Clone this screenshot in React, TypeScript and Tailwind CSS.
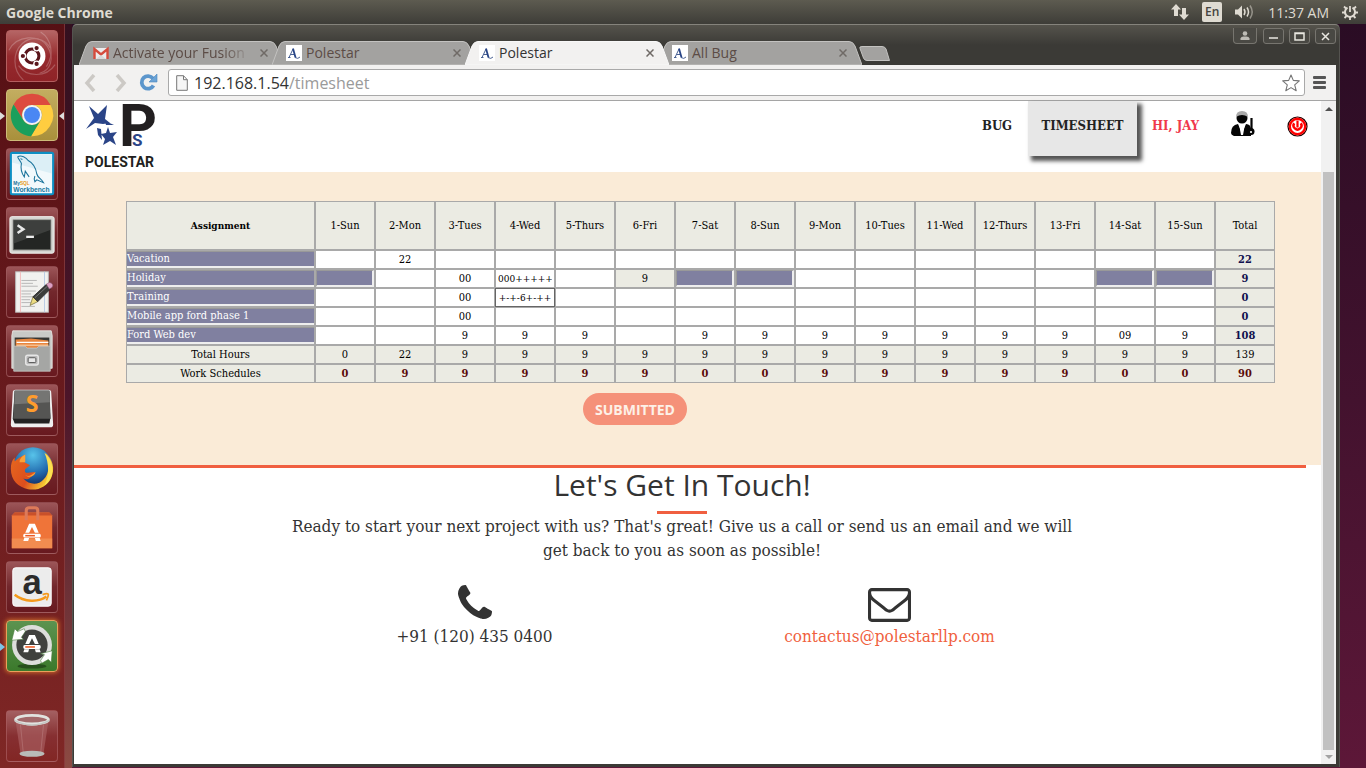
import React from "react";

const SERIF = "font-['DejaVu_Serif_Condensed','DejaVu_Serif',serif]";
const SANS = "font-['Open_Sans','Noto_Sans',sans-serif]";

/* ---------- Timesheet data ---------- */

const DAYS = [
  "1-Sun", "2-Mon", "3-Tues", "4-Wed", "5-Thurs", "6-Fri", "7-Sat", "8-Sun",
  "9-Mon", "10-Tues", "11-Wed", "12-Thurs", "13-Fri", "14-Sat", "15-Sun",
];

type Row = { name: string; cells: Record<number, string>; total: string; off?: number[]; shaded?: number[] };

const ROWS: Row[] = [
  { name: "Vacation", cells: { 1: "22" }, total: "22" },
  { name: "Holiday", cells: { 2: "00", 3: "000++++++", 5: "9" }, total: "9", off: [0, 6, 7, 13, 14], shaded: [5] },
  { name: "Training", cells: { 2: "00", 3: "+-+-6+-++" }, total: "0" },
  { name: "Mobile app ford phase 1", cells: { 2: "00" }, total: "0" },
  {
    name: "Ford Web dev",
    cells: { 2: "9", 3: "9", 4: "9", 6: "9", 7: "9", 8: "9", 9: "9", 10: "9", 11: "9", 12: "9", 13: "09", 14: "9" },
    total: "108",
  },
];

const TOTAL_HOURS = ["0", "22", "9", "9", "9", "9", "9", "9", "9", "9", "9", "9", "9", "9", "9"];
const SCHEDULES = ["0", "9", "9", "9", "9", "9", "0", "0", "9", "9", "9", "9", "9", "0", "0"];

/* ---------- Launcher icons ---------- */

const UbuntuIcon = () => (
  <svg viewBox="0 0 52 52" className="size-full">
    <g fill="none" stroke="#fff" strokeWidth="1.2" opacity=".22">
      <path d="M2 20C10 4 34 3 42 16s3 25-8 28" /><path d="M17 51C5 40 6 22 16 13s24-5 29 5" />
      <path d="M50 35C41 49 20 48 12 36" /><path d="M35 1c12 8 14 24 6 36" />
    </g>
    <circle cx="26" cy="26" r="14" fill="#fff" />
    <circle cx="26" cy="26" r="7.2" fill="none" stroke="#5a161c" strokeWidth="3.2" />
    <g stroke="#fff" strokeWidth="1.4" fill="#5a161c">
      <circle cx="16.5" cy="26" r="2.9" /><circle cx="30.8" cy="17.8" r="2.9" /><circle cx="30.8" cy="34.2" r="2.9" />
    </g>
  </svg>
);

const ChromeIcon = () => (
  <svg viewBox="0 0 52 52" className="size-full">
    <path fill="#dd4b3e" d="M26 15.5H45.3A22 22 0 0 0 6.9 15L16.9 31.25A10.5 10.5 0 0 1 26 15.5Z" />
    <path fill="#ffcd40" d="M45.3 15.5A22 22 0 0 1 25 48L35.1 31.25A10.5 10.5 0 0 0 26 15.5Z" />
    <path fill="#1a9f5c" d="M6.9 15A22 22 0 0 0 25 48L35.1 31.25A10.5 10.5 0 0 1 16.9 31.25Z" />
    <circle cx="26" cy="26" r="10.3" fill="#f3f3f3" />
    <circle cx="26" cy="26" r="8.3" fill="#4a87f3" />
  </svg>
);

const WorkbenchIcon = () => (
  <svg viewBox="0 0 52 52" className="size-full">
    <rect x="4" y="4" width="44" height="43" rx="1.5" fill="#f2f9fc" stroke="#0d8fc4" strokeWidth="2.2" />
    <path d="M5.5 5.500h41v20L5.500 14z" fill="#dceff6" />
    <path d="M11 8c4-2 9 1 11 4 6 3 8 8 9 14 1 4 5 5 7 9l-7-3-2 2c-1-3-1-4 0-6M11 8c1 3 3 4 4 7-1 5 0 10 3 14l1-6 4 6M14 10l2 1" fill="none" stroke="#1a739b" strokeWidth="1.1" />
    <text x="6.500" y="37.500" fontSize="5" fontWeight="700" fill="#1a739b" fontFamily="Liberation Sans">My<tspan fill="#e99a20">SQL</tspan></text>
    <text x="6.500" y="44.500" fontSize="7" fontWeight="700" fill="#14779f" fontFamily="Liberation Sans">Workbench</text>
  </svg>
);

const TerminalIcon = () => (
  <svg viewBox="0 0 52 52" className="size-full">
    <rect x="3" y="9" width="46" height="38" rx="2" fill="#d5d6d2" stroke="#f2f2f0" />
    <rect x="6.500" y="12.500" width="39" height="31" fill="#242624" stroke="#6b6d69" />
    <path d="M7 13h38v10L7 37z" fill="#454845" opacity=".75" />
    <path d="M11 18l6 4-6 4" fill="none" stroke="#e8e8e8" strokeWidth="2.6" /><path d="M20 30h8" stroke="#eee" strokeWidth="2.4" />
  </svg>
);

const EditorIcon = () => (
  <svg viewBox="0 0 52 52" className="size-full">
    <rect x="9" y="5" width="34" height="42" fill="#f1f1ef" stroke="#bbb" />
    <path d="M14 5v42" stroke="#f3bcbc" strokeWidth="1" /><path d="M39 5v42" stroke="#b9cbe4" strokeWidth="1" />
    <path d="M15 14h16M15 17h12M15 20h17M15 25h15M15 28h10M15 31h16M15 34h9M15 37h12M15 41h14" stroke="#b5b5b5" strokeWidth="1" />
    <path d="M24 40l3-9 5 5z" fill="#ebdc83" stroke="#7c7342" strokeWidth=".8" />
    <path d="M27 31L41 18l4 5-13 13z" fill="#3b3d3b" stroke="#1b1b1b" strokeWidth=".8" /><path d="M29 32l13-12" stroke="#777" />
    <path d="M41 18l3-2q5 1 3 5l-3 2z" fill="#dd9fc2" stroke="#915e7a" strokeWidth=".6" />
  </svg>
);

const FilesIcon = () => (
  <svg viewBox="0 0 52 52" className="size-full">
    <path d="M6 5h40l1 5v34H5V10z" fill="#c9cac7" stroke="#f0f0ee" strokeWidth=".8" />
    <rect x="8" y="12" width="36" height="12" fill="#343533" />
    <path d="M9 14l16-1 18 2v9H9z" fill="#e8863f" /><path d="M10 17h33" stroke="#fff" strokeWidth="1.5" /><path d="M10 20h33" stroke="#f8bf8d" strokeWidth="1.5" />
    <path d="M7 21h12l2 2h10l2-2h12v26H7z" fill="#a5a6a4" stroke="#c9cac8" strokeWidth=".8" />
    <rect x="19.500" y="30.500" width="13" height="10" rx="2" fill="#bbb" stroke="#e6e6e6" strokeWidth="1.5" />
    <rect x="22" y="33" width="8" height="5" rx="1" fill="#e7e7e7" stroke="#555" />
  </svg>
);

const SublimeIcon = () => (
  <svg viewBox="0 0 52 52" className="size-full overflow-visible">
    <path d="M6 8q0-3 3-3h34q3 0 3 3l2 33q0 3-3 3H7q-3 0-3-3z" fill="#efefef" />
    <path d="M8 6h36l1 29-1 5H8l-2-5z" fill="#222" />
    <path d="M8 6h36l1.500 29h-39z" fill="#555553" /><path d="M8 6h36l.6 12-36.900 2z" fill="#757573" />
    <text x="26" y="28" textAnchor="middle" fontSize="24" fontWeight="700" fill="#ff9c2c" fontFamily="Open Sans">S</text>
  </svg>
);

const FirefoxIcon = () => (
  <svg viewBox="0 0 52 52" className="size-full">
    <defs>
      <radialGradient id="ffBlue" cx=".5" cy=".2" r=".8"><stop offset="0" stopColor="#57c3ea" /><stop offset=".6" stopColor="#2169ad" /><stop offset="1" stopColor="#12275e" /></radialGradient>
      <linearGradient id="ffFox" x1="0" y1="0" x2="1" y2=".5"><stop offset="0" stopColor="#e66a1f" /><stop offset=".6" stopColor="#dd4e1d" /><stop offset="1" stopColor="#f9d035" /></linearGradient>
    </defs>
    <circle cx="27" cy="24" r="20.500" fill="url(#ffBlue)" />
    <path d="M40 9c8 7 10 17 6 26S32 49 22 47 4 38 4 26c0-5 1-9 4-12v4l5-4 6-3-1 8 6 3-5 4c-1 3 0 4 3 4l7-1c1 3-3 4-5 6-3 3-7 1-7 1 6 7 16 7 21 1 7-7 6-18 2-28z" fill="url(#ffFox)" />
    <path d="M39 9c8 6 10 17 7 25-1 3-4 7-7 9 5-10 5-22 0-34z" fill="#fbe052" />
    <path d="M19 11c-4 2-6 5-6 8l6 0zM19 32c3 3 7 0 11-3-2 5-8 7-11 3z" fill="#f9a23a" />
  </svg>
);

const StoreA = ({ y = 0 }: { y?: number }) => (
  <g transform={`translate(0 ${y})`}>
    <path d="M23 21.500h6l4 9.500h-4l-3-6-3 6h-4zM18 36.500h5l-1 3h-5zM29 36.500h5l1 3h-5z" fill="#fff" />
    <rect x="17" y="32" width="18" height="4" rx="1.500" fill="#fff" /><path d="M19 34h10" stroke="#ee5a23" strokeWidth="1.600" />
  </g>
);

const SoftwareIcon = () => (
  <svg viewBox="0 0 52 52" className="size-full">
    <path d="M5 13l3-3h36l3 3v34H5z" fill="#ef7439" /><path d="M5 13l3-3h36l3 3z" fill="#c9502a" /><path d="M5 37h42v10H5z" fill="#f28c50" />
    <path d="M20 18V8q0-3 3-3h6q3 0 3 3v10" fill="none" stroke="#dd7a59" strokeWidth="3.200" />
    <StoreA />
  </svg>
);

const AmazonIcon = () => (
  <svg viewBox="0 0 52 52" className="size-full overflow-visible">
    <rect x="6" y="6" width="40" height="40" rx="3" fill="#ececec" stroke="#fff" />
    <text x="26" y="33" textAnchor="middle" fontSize="36" fontWeight="700" fill="#2b2b2b" fontFamily="Liberation Sans">a</text>
    <path d="M8 34c10 8 25 8 33 2" fill="none" stroke="#f59a1c" strokeWidth="2.600" /><path d="M37 34q6-2 6 0t-2 6" fill="none" stroke="#f59a1c" strokeWidth="1.800" />
  </svg>
);

const UpdaterIcon = () => (
  <svg viewBox="0 0 52 52" className="size-full">
    <ellipse cx="26" cy="47" rx="15" ry="2.500" fill="#27501d" />
    <circle cx="26" cy="25" r="18.500" fill="#40413e" stroke="#dcdddb" strokeWidth="4.500" />
    <path d="M5 20L8 8l3 3 7-3 1 3-4 6 2 2z" fill="#fff" stroke="#4b7d3f" strokeWidth=".6" /><path d="M47 31l-1 12-3-3-7 4-1-3 4-6-4-1z" fill="#fff" stroke="#4b7d3f" strokeWidth=".6" />
    <StoreA y={-7} />
  </svg>
);

const TrashIcon = () => (
  <svg viewBox="0 0 52 52" className="size-full">
    <path d="M9 11l5 33q12 5 24 0l5-33z" fill="#b06a6c" opacity=".55" /><path d="M14 14l3 30M38 14l-3 30" stroke="#d5a9a9" opacity=".3" />
    <ellipse cx="26" cy="44.500" rx="13" ry="3.200" fill="#b9bcb8" />
    <ellipse cx="26" cy="9" rx="17" ry="4.500" fill="#a3696b" stroke="#e1e3e0" strokeWidth="3" />
    <path d="M8 10q18 9 36 0" fill="none" stroke="#c4c6c3" strokeWidth="1.500" />
  </svg>
);

const GLASS = "bg-linear-to-b from-[#9c5558] via-[#72272c] to-[#68191f] border-[#a05c5f]/70";

const APPS = [
  { name: "Search your computer", icon: <UbuntuIcon />, tile: "bg-linear-to-b from-[#b56565] via-[#962a2e] to-[#8f2327] border-[#b45f5f]" },
  { name: "Google Chrome", icon: <ChromeIcon />, tile: "bg-linear-to-b from-[#c3ad60] to-[#a9903b] border-[#cdbb79]" },
  { name: "MySQL Workbench", icon: <WorkbenchIcon />, tile: GLASS },
  { name: "Terminal", icon: <TerminalIcon />, tile: GLASS },
  { name: "Text Editor", icon: <EditorIcon />, tile: GLASS },
  { name: "Files", icon: <FilesIcon />, tile: GLASS },
  { name: "Sublime Text", icon: <SublimeIcon />, tile: GLASS },
  { name: "Firefox", icon: <FirefoxIcon />, tile: GLASS },
  { name: "Software Center", icon: <SoftwareIcon />, tile: GLASS },
  { name: "Amazon", icon: <AmazonIcon />, tile: GLASS },
  { name: "Software Updater", icon: <UpdaterIcon />, tile: "bg-linear-to-b from-[#5c9350] to-[#3b792b] border-[#eaa05c] shadow-[0_0_4px_1px_#c8662b]" },
];

function Launcher() {
  return (
    <nav aria-label="Launcher" className="flex w-[65px] shrink-0 flex-col items-center gap-[7px] border-r border-[#8f4a4c]/60 bg-linear-to-b from-[#561014] via-[#681a1d] to-[#7f2725] pr-px pt-[6px] pb-[6px]">
      {APPS.map((a, i) => (
        <button key={a.name} aria-label={a.name} className={`relative size-[52px] shrink-0 rounded-[4px] border ${a.tile}`}>
          {a.icon}
          {i === 1 && <span className="absolute top-[22px] -left-[7px] border-y-4 border-l-5 border-y-transparent border-l-[#ddd]" />}
          {i === 1 && <span className="absolute top-[22px] -right-[7px] border-y-4 border-r-5 border-y-transparent border-r-[#ddd]" />}
          {i === 10 && <span className="absolute top-[22px] -left-[7px] border-y-4 border-l-5 border-y-transparent border-l-[#7cc4e8]" />}
        </button>
      ))}
      <button aria-label="Trash" className="mt-auto size-[52px] shrink-0 rounded-[4px] border border-[#a85c5f]/70 bg-linear-to-b from-[#a46062] via-[#862f31] to-[#822624]">
        <TrashIcon />
      </button>
    </nav>
  );
}

/* ---------- Desktop panel ---------- */

function TopPanel() {
  return (
    <header className={`flex h-6 shrink-0 items-center bg-linear-to-b from-[#5d5b50] to-[#3e3d38] pr-2 pl-[6px] text-[#dfdbd2] ${SANS}`}>
      <span className="text-[14px] font-bold">Google Chrome</span>
      <div className="ml-auto flex items-center">
        <svg className="h-4 w-[18px]" viewBox="0 0 18 16" fill="#dfdbd2"><path d="M5 0l5 5.500H7V12H3V5.500H0zM13 16l5-5.500h-3V4h-4v6.500H8z" /></svg>
        <span className="ml-[13px] flex h-5 w-5 items-center justify-center rounded-[2px] bg-[#dfdbd2] text-[12px] font-semibold text-[#45443e]">En</span>
        <svg className="ml-[13px] h-4 w-5" viewBox="0 0 20 16" fill="none" stroke="#dfdbd2" strokeWidth="1.500">
          <path d="M0 5.500h3l4-4v13l-4-4H0z" fill="#dfdbd2" stroke="none" /><path d="M9 5q2 3 0 6M12 3.500q3 4.500 0 9" /><path d="M15 1.500q4.500 6.500 0 13" opacity=".5" />
        </svg>
        <span className="ml-[13px] text-[14px]">11:37 AM</span>
        <svg className="ml-[13px] h-4 w-4" viewBox="0 0 16 16" fill="none" stroke="#dfdbd2">
          <path d="M5.500 3.600a5 5 0 1 0 5 0" strokeWidth="2" /><path d="M8 2v6" strokeWidth="1.800" />
          <path d="M0 8.500h3M13 8.500h3M2 2.500l2.500 2.500M14 2.500L11.500 5M2.500 14l2-2M13.500 14l-2-2M8 13v3" strokeWidth="1.800" />
        </svg>
      </div>
    </header>
  );
}

/* ---------- Browser chrome ---------- */

const GmailIcon = () => (
  <svg className="size-4 shrink-0" viewBox="0 0 16 16">
    <rect x="1" y="3" width="14" height="11" fill="#ececec" /><path d="M1.500 14V4L8 9.500 14.500 4v10" fill="none" stroke="#d54b3d" strokeWidth="2.400" /><path d="M3 14l5-4 5 4" fill="#d8d8d8" />
  </svg>
);

const PolestarFavicon = () => (
  <svg className="size-4 shrink-0" viewBox="0 0 16 16">
    <rect width="16" height="16" fill="#fff" />
    <path d="M3 12.500L7 4M4.500 9.500h3.500M2 12.500h2.500M9 12.500q3 2 5-.5" fill="none" stroke="#4a6294" strokeWidth="1" /><path d="M7 3.500l2.500 9" stroke="#274486" strokeWidth="1.800" />
  </svg>
);

const CloseGlyph = () => (
  <svg className="size-2" viewBox="0 0 8 8" stroke="currentColor" strokeWidth="1.500"><path d="M.5.5l7 7M7.500.5l-7 7" /></svg>
);

function Tab({ title, active, first, gmail }: { title: string; active?: boolean; first?: boolean; gmail?: boolean }) {
  return (
    <div className={`relative flex h-6 w-[204px] shrink-0 items-center pr-[15px] pl-[14px] ${first ? "" : "-ml-[11px]"} ${active ? "z-10 text-[#333]" : "text-[#5c4c46]"}`}>
      <svg className="absolute inset-0 size-full" viewBox="0 0 204 24" preserveAspectRatio="none">
        <path
          d="M0 24L7 5Q9 .5 13 .5H191Q195 .5 197 5L204 24Z"
          fill={active ? "#f2f1f0" : "#a3a2a0"}
          stroke={active ? "#f8f8f8" : "#c3c2c0"}
          strokeWidth="1"
        />
      </svg>
      <span className="relative flex min-w-0 flex-1 items-center gap-1">
        {gmail ? <GmailIcon /> : <PolestarFavicon />}
        <button className={`w-[138px] overflow-hidden text-left text-[14px] leading-5 whitespace-nowrap ${gmail ? "mask-r-from-80%" : ""}`}>{title}</button>
      </span>
      <button aria-label={`Close ${title}`} className="relative text-[#6f6a66]"><CloseGlyph /></button>
    </div>
  );
}

function TitleBar() {
  return (
    <div className="flex h-[41px] shrink-0 items-end rounded-t-[4px] border-t border-[#85837c] bg-linear-to-b from-[#55534c] to-[#3b3a36] to-50% pl-[6px]">
      <Tab title="Activate your Fusion" first gmail />
      <Tab title="Polestar" />
      <Tab title="Polestar" active />
      <Tab title="All Bug" />
      <button aria-label="New tab" className="mb-1 -ml-[3px]">
        <svg className="h-[15px] w-[31px]" viewBox="0 0 31 15"><path d="M1 2.500Q0 .5 3 .5H23Q26 .5 27 3L30.500 14.500H8Q5.500 14.500 4.500 12Z" fill="#a3a2a0" stroke="#c3c2c0" /></svg>
      </button>
      <div className="mr-[3px] ml-auto flex items-start gap-[5px] self-start pt-[3px] text-[#ddd]">
        <button aria-label="Profile" className="mr-[1px] flex h-4 w-6 items-center justify-center rounded-b-[4px] border border-t-0 border-[#77756f] bg-[#4a4944]">
          <svg className="h-[10px] w-[10px]" viewBox="0 0 10 10" fill="#bdbbb5"><circle cx="5" cy="2.500" r="2.300" /><path d="M.5 9V7.500Q1 5.500 3.500 5.500h3Q9 5.500 9.500 7.500V9z" /></svg>
        </button>
        {[
          ["Minimize", "M2 8h9"],
          ["Maximize", "M2 3h9v7H2zM2 3.500h9"],
          ["Close window", "M3 3l7 7M10 3l-7 7"],
        ].map(([label, d]) => (
          <button key={label} aria-label={label} className="flex h-4 w-[21px] items-center justify-center rounded-[3px] border border-[#77756f] bg-[#494843]">
            <svg className="size-[13px]" viewBox="0 0 13 13" fill="none" stroke="#e8e6e0" strokeWidth="1.500"><path d={d} /></svg>
          </button>
        ))}
      </div>
    </div>
  );
}

function Toolbar() {
  return (
    <div className="mx-px flex h-9 shrink-0 items-center border-b border-[#a5a5a5] bg-[#f2f1f0] pr-[10px] pl-[10px]">
      <button aria-label="Back"><svg className="h-[18px] w-3" viewBox="0 0 12 18" fill="none" stroke="#ccc9c5" strokeWidth="3.500"><path d="M10 1L3 9l7 8" /></svg></button>
      <button aria-label="Forward" className="ml-[19px]"><svg className="h-[18px] w-3" viewBox="0 0 12 18" fill="none" stroke="#ccc9c5" strokeWidth="3.500"><path d="M2 1l7 8-7 8" /></svg></button>
      <button aria-label="Reload" className="ml-[12px]">
        <svg className="h-[19px] w-[19px]" viewBox="0 0 19 19"><path d="M14.500 12.500a6.300 6.300 0 1 1-.5-7" fill="none" stroke="#5c96cc" strokeWidth="3.800" /><path d="M18 1v8h-8z" fill="#6ba3d6" stroke="#4c87be" strokeWidth=".6" /></svg>
      </button>
      <div className="ml-[10px] flex h-[27px] min-w-0 flex-1 items-center rounded-[3px] border border-[#a9a9a9] bg-white pr-[4px] pl-[7px]">
        <svg className="h-4 w-3 shrink-0" viewBox="0 0 12 16" fill="#f6f6f6" stroke="#777"><path d="M.7.7h6.800l3.800 4v10.600H.7zM7.500.7v4h3.800" /></svg>
        <div className={`relative ml-[6px] h-6 flex-1 text-[16px] leading-6 text-[#9a9a9a] ${SANS}`}>
          <span className="text-[#333]">192.168.1.54</span>/timesheet
        </div>
        <button aria-label="Bookmark this page">
          <svg className="size-[18px]" viewBox="0 0 18 18" fill="#fff" stroke="#757575" strokeWidth="1.100" strokeLinejoin="round"><path d="M9 1l2.300 5.400 6 .5-4.600 3.900 1.500 5.900L9 13.600l-5.200 3.100 1.500-5.900L.7 6.900l6-.5z" /></svg>
        </button>
      </div>
      <button aria-label="Menu" className="ml-[8px]"><svg className="h-[13px] w-[13px]" viewBox="0 0 13 13" fill="#555"><rect width="13" height="3" rx="1" /><rect y="5" width="13" height="3" rx="1" /><rect y="10" width="13" height="3" rx="1" /></svg></button>
    </div>
  );
}

/* ---------- Polestar page ---------- */

const Logo = () => (
  <svg className="h-[66px] w-[74px] overflow-visible" viewBox="0 0 74 66" role="img" aria-label="Polestar">
    <g fill="#2a4487">
      <path d="M4 3l9 8 9-9-2 14 5 4-7 1-8-1-9 6 8-11z" />
      <path d="M20 18l9 4-8 0zM12 25l4 1 1 11-4-5zM23 24l2 6 7-1-4 5 3 8-6-4-7 4 2-6-4-5 5-1z" />
    </g>
    <text x="34" y="43" fontSize="59" fontWeight="700" fill="#221f20" fontFamily="Roboto, Liberation Sans">P</text>
    <text x="47" y="43" fontSize="17" fontWeight="700" fill="#2a4487" fontFamily="Roboto, Liberation Sans">S</text>
    <text x="0" y="64" fontSize="14" fontWeight="700" fill="#221f20" fontFamily="Roboto, Liberation Sans">POLESTAR</text>
  </svg>
);

function SiteHeader() {
  return (
    <header className="flex h-[71px] shrink-0 items-start justify-between bg-white pr-[13px] pl-[11px]">
      <a href="#home" className="pt-[2px]"><Logo /></a>
      <nav className={`flex items-start text-[13px] leading-5 font-bold text-[#222] ${SERIF}`}>
        <a href="#bug" className="w-[46px] pt-[15px]">BUG</a>
        <a href="#timesheet" className="h-[55px] w-[109px] bg-[#e7e7e7] pt-[15px] text-center shadow-[4px_4px_4px_1px_#555]">TIMESHEET</a>
        <a href="#profile" className="w-[94px] pt-[15px] pl-[15px] text-[#f0394d]">HI, JAY</a>
        <a href="#account" aria-label="Account" className="w-[56px] pt-[10px]">
          <svg className="h-[25px] w-6" viewBox="0 0 24 25">
            <circle cx="11" cy="7" r="5.500" fill="#050505" /><path d="M5 6q0-6 6-6t6 6q-6-4-12 0z" fill="#aaa" />
            <path d="M0 22q0-8 7-9l4 9 4-9q5 0 5 6v6H3q-3-1-3-3z" fill="#050505" /><path d="M8 13h6l-2 11h-2z" fill="#fff" />
            <circle cx="20" cy="20.500" r="3.500" fill="#050505" /><path d="M20.500 19V7" stroke="#050505" strokeWidth="2.200" /><circle cx="20" cy="21" r="1.100" fill="#fff" />
          </svg>
        </a>
        <a href="#logout" aria-label="Log out" className="pt-[15px]">
          <svg className="size-[21px]" viewBox="0 0 21 21"><circle cx="10.500" cy="10.500" r="9.500" fill="#fff" stroke="#200" strokeWidth="1.200" /><circle cx="10.500" cy="10.500" r="7.700" fill="#fff" stroke="#f00" strokeWidth="2.400" /><path d="M7.200 7.200a4 4 0 1 0 6.600 0" fill="none" stroke="#f00" strokeWidth="2.400" /><path d="M10.500 4.500v7" stroke="#f00" strokeWidth="2.200" /></svg>
        </a>
      </nav>
    </header>
  );
}

const CELL = "border border-[#a9a9a9] p-0";

function TimesheetTable() {
  return (
    <table className={`w-full table-fixed border-separate border-spacing-0 text-center text-[11px] leading-[17px] text-black ${SERIF}`}>
      <thead>
        <tr className="h-[49px] bg-[#ebebe3]">
          <th className={`w-[189px] text-[10px] font-bold ${CELL}`}>Assignment</th>
          {DAYS.map((d) => <th key={d} className={`overflow-hidden font-normal whitespace-nowrap ${CELL}`}>{d}</th>)}
          <th className={`font-normal ${CELL}`}>Total</th>
        </tr>
      </thead>
      <tbody>
        {ROWS.map((row) => (
          <tr key={row.name} className="h-[19px]">
            <th scope="row" className={`${CELL} text-left font-normal`}>
              <div className="h-[17px] border-t border-b-2 border-t-[#999] border-b-[#eee] bg-[#8080a0] leading-[14px] text-white">{row.name}</div>
            </th>
            {DAYS.map((d, i) => {
              const off = row.off?.includes(i);
              const focused = row.name === "Training" && i === 3;
              const value = row.cells[i] ?? "";
              return (
                <td key={d} className={`border p-0 ${focused ? "border-[#666]" : "border-[#a9a9a9]"}`}>
                  <input
                    aria-label={`${row.name} ${d}`}
                    defaultValue={value}
                    disabled={off}
                    className={`block h-[17px] w-full px-[2px] text-center outline-none ${value.length > 4 ? "text-[10px]" : ""} ${
                      off ? "border-t border-r-2 border-b-2 border-l border-t-[#999] border-r-[#eee] border-b-[#eee] border-l-[#999] bg-[#8080a0]" : row.shaded?.includes(i) ? "bg-[#ebebe3]" : "bg-white"
                    }`}
                  />
                </td>
              );
            })}
            <td className={`bg-[#ebebe3] font-bold text-[#10104e] ${CELL}`}>{row.total}</td>
          </tr>
        ))}
        <tr className="h-[19px] bg-[#ebebe3]">
          <th scope="row" className={`font-normal ${CELL}`}>Total Hours</th>
          {TOTAL_HOURS.map((v, i) => <td key={i} className={CELL}>{v}</td>)}
          <td className={CELL}>139</td>
        </tr>
        <tr className="h-[19px] bg-[#ebebe3]">
          <th scope="row" className={`font-normal ${CELL}`}>Work Schedules</th>
          {SCHEDULES.map((v, i) => <td key={i} className={`font-bold text-[#5a0a0a] ${CELL}`}>{v}</td>)}
          <td className={`font-bold text-[#5a0a0a] ${CELL}`}>90</td>
        </tr>
      </tbody>
    </table>
  );
}

function Contact() {
  return (
    <section className={`flex flex-1 flex-col items-center pr-[31px] text-[#333] ${SERIF}`}>
      <h2 className={`text-[30px] leading-[33px] ${SANS}`}>Let's Get In Touch!</h2>
      <hr className="mt-[10px] w-[50px] border-0 border-t-[3px] border-[#f05f40]" />
      <p className="w-[800px] max-w-full text-center text-[17px] leading-6">
        Ready to start your next project with us? That's great! Give us a call or send us an email and we will get back to you as soon as possible!
      </p>
      <div className="mt-[23px] grid w-[830px] max-w-full grid-cols-2 text-center text-[17px] leading-6">
        <div className="flex flex-col items-center gap-[5px]">
          <svg className="h-[34px] w-[34px]" viewBox="0 128 1408 1408" fill="#333"><path d="M1408 1240q0 27-10 70.500t-20.500 68.500q-21 50-122 106-94 51-186 51-27 0-53-3.500t-57.500-12.500-47-14.500-55.500-20.500-49-18q-98-35-175-83-127-79-264-216t-216-264q-48-77-83-175-3-9-18-49t-20.500-55.500-14.500-47-12.500-57.500-3.500-53q0-92 51-186 56-101 106-122 25-10 68.500-20.500t70.500-10.500q14 0 21 3 18 6 53 76 11 19 30 54t35 63.500 31 53.500q3 4 17.500 25t21.500 35.500 7 28.500q0 20-28.500 50t-62 55-62 53-28.500 46q0 9 5 22.500t8.500 20.500 14 24 11.500 19q76 137 174 235t235 174q2 1 19 11.500t24 14 20.500 8.500 22.500 5q18 0 46-28.500t53-62 55-62 50-28.500q14 0 28.500 7t35.500 21.500 25 17.500q25 15 53.500 31t63.500 35 54 30q70 35 76 53 3 7 3 21z" /></svg>
          <p>+91 (120) 435 0400</p>
        </div>
        <div className="flex flex-col items-center">
          <svg className="mt-[3px] mb-[2px] h-[34px] w-[43px]" viewBox="0 256 1792 1408" fill="#333"><path d="M1664 1504v-768q-32 36-69 66-268 206-426 338-51 43-83 67t-86.500 48.500-102.500 24.500h-2q-48 0-102.500-24.500t-86.500-48.500-83-67q-158-132-426-338-37-30-69-66v768q0 13 9.500 22.500t22.500 9.500h1472q13 0 22.500-9.500t9.500-22.500zm0-1051v-24.500l-.5-13-3-12.500-5.500-9-9-7.500-14-2.500h-1472q-13 0-22.500 9.500t-9.500 22.500q0 168 147 284 193 152 401 317 6 5 35 29.500t46 37.500 44.500 31.500 50.500 27.500 43 9h2q20 0 43-9t50.500-27.500 44.500-31.500 46-37.500 35-29.500q208-165 401-317 54-43 100.500-115.500t46.500-131.500zm128-37v1088q0 66-47 113t-113 47h-1472q-66 0-113-47t-47-113v-1088q0-66 47-113t113-47h1472q66 0 113 47t47 113z" /></svg>
          <a href="mailto:contactus@polestarllp.com" className="text-[#f05f40]">contactus@polestarllp.com</a>
        </div>
      </div>
    </section>
  );
}

function Scrollbar() {
  return (
    <div className="flex w-[15px] shrink-0 flex-col items-center bg-[#f1f1f1]">
      <div className="flex h-[71px] shrink-0 justify-center pt-[6px]"><span className="h-0 border-x-4 border-b-4 border-x-transparent border-b-[#505050]" /></div>
      <div className="w-[11px] flex-1 bg-[#c1c1c1]" />
      <div className="flex h-[14px] items-center"><span className="border-x-4 border-t-4 border-x-transparent border-t-[#a3a3a3]" /></div>
    </div>
  );
}

export default function App() {
  return (
    <div className={`flex min-h-screen flex-col ${SANS}`}>
      <TopPanel />
      <div className="flex flex-1 bg-linear-to-b from-[#2a0c24] to-[#5d1738]">
        <Launcher />
        <div className="w-[7px] shrink-0 bg-linear-to-b from-[#34101f] via-[#4c1529] to-[#8c4a42]" />
        <div className="mr-[26px] mb-[1px] flex min-w-0 flex-1 flex-col rounded-t-[5px] border-x border-[#555450] bg-[#3b3a36]">
          <TitleBar />
          <div className="mr-[2px] flex flex-1 flex-col">
            <Toolbar />
            <div className="mx-px mb-[3px] flex flex-1 bg-white">
              <main className="flex min-w-0 flex-1 flex-col">
                <SiteHeader />
                <section className="relative flex min-h-[293px] flex-col items-start bg-[#faebd7] pt-[29px] pr-[46px] pl-[52px]">
                  <TimesheetTable />
                  <button className={`mt-[10px] ml-[457px] h-8 rounded-full bg-[#f59179] px-3 text-[14px] font-bold text-[#fdf1e8] ${SANS}`}>SUBMITTED</button>
                </section>
                <hr className="mr-[15px] border-0 border-t-[3px] border-[#f05f40]" />
                <Contact />
              </main>
              <Scrollbar />
            </div>
          </div>
        </div>
      </div>
    </div>
  );
}
